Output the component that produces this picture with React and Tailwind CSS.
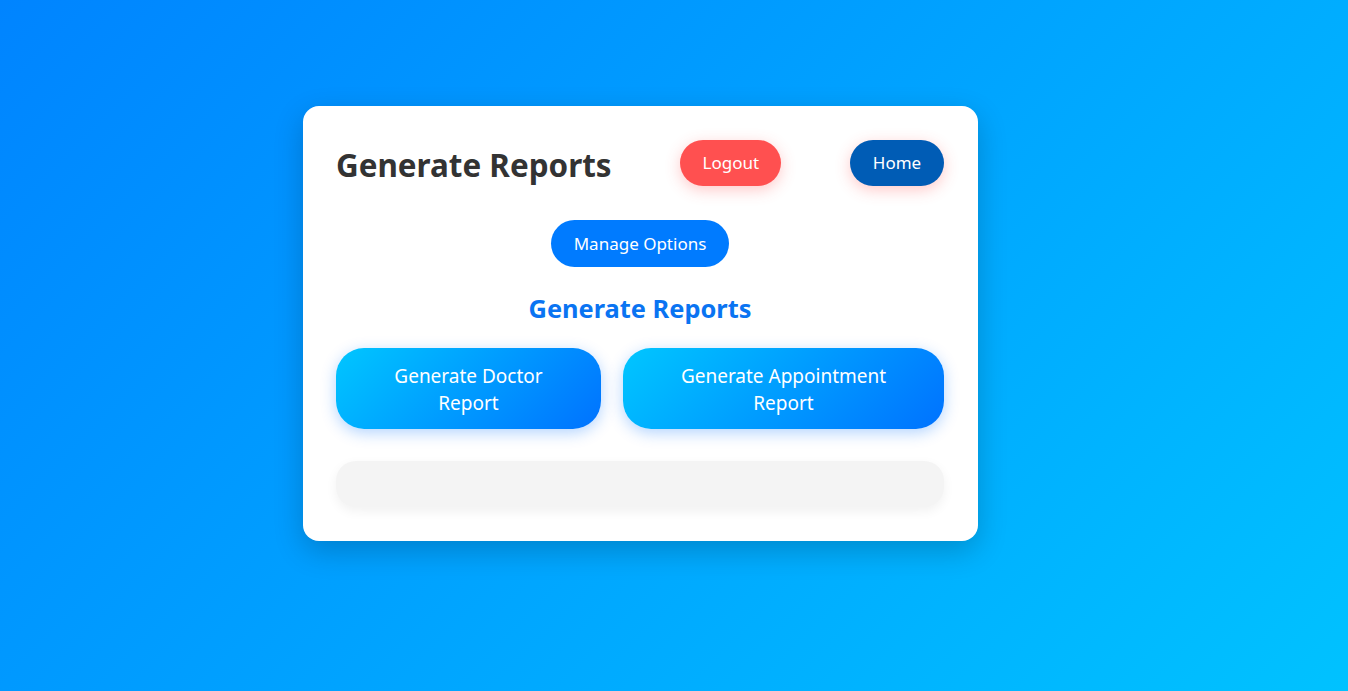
export default function App() {
  const font = { fontFamily: '"Noto Sans", "Open Sans", sans-serif' };
  return (
    <div
      className="min-h-[691px] w-full bg-[linear-gradient(135deg,#0084ff_0%,#00c2ff_100%)] pt-[106px] pl-[303px]"
      style={font}
    >
      <div className="w-[675px] rounded-[16px] bg-white pl-[33px] pr-[34px] py-[34px] shadow-[0_10px_30px_rgba(0,0,0,0.2)]">
        <div className="flex h-[46px] items-center justify-between">
          <h1 className="pt-[3px] text-[31.4px] font-bold leading-none text-[#333]">Generate Reports</h1>
          <button className="h-[46px] w-[101px] rounded-full bg-[#ff5050] text-[17px] text-white shadow-[0_4px_15px_rgba(255,77,77,0.3)]">
            Logout
          </button>
          <button className="h-[46px] w-[94px] rounded-full bg-[#005cb5] text-[17px] text-white shadow-[0_4px_15px_rgba(255,77,77,0.3)]">
            Home
          </button>
        </div>
        <div className="mt-[34px] flex justify-center">
          <button className="h-[47px] w-[178px] rounded-full bg-[#007bff] text-[17px] text-white">
            Manage Options
          </button>
        </div>
        <h2 className="mt-[25px] text-center text-[25.4px] font-bold leading-[33px] text-[#0a74f2]">
          Generate Reports
        </h2>
        <div className="mt-[23px] flex gap-[22px]">
          <button className="h-[81px] w-[265px] rounded-[28px] bg-[linear-gradient(135deg,#00c6ff,#0072ff)] px-[40px] pt-[2px] text-[19px] leading-[27px] text-white shadow-[0_4px_15px_rgba(0,114,255,0.3)]">
            Generate Doctor Report
          </button>
          <button className="h-[81px] flex-1 rounded-[28px] bg-[linear-gradient(135deg,#00c6ff,#0072ff)] px-[45px] pt-[2px] text-[19px] leading-[27px] text-white shadow-[0_4px_15px_rgba(0,114,255,0.3)]">
            Generate Appointment Report
          </button>
        </div>
        <div className="mt-[32px] h-[46px] rounded-[20px] bg-[#f4f4f4] shadow-[0_4px_12px_rgba(0,0,0,0.06)]"></div>
      </div>
    </div>
  );
}
